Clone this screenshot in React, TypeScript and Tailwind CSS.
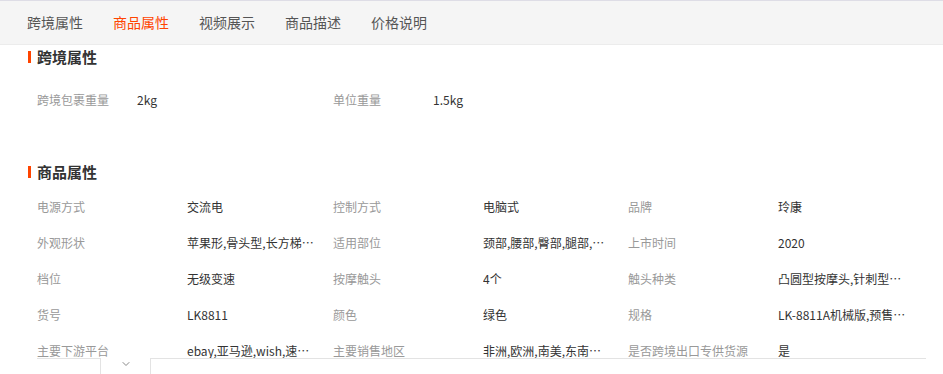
import { ChevronDown } from 'lucide-react';

const tabs = ['跨境属性', '商品属性', '视频展示', '商品描述', '价格说明'];

const crossBorder = [
  { label: '跨境包裹重量', value: '2kg' },
  { label: '单位重量', value: '1.5kg' },
];

const attrs = [
  { label: '电源方式', value: '交流电' },
  { label: '控制方式', value: '电脑式' },
  { label: '品牌', value: '玲康' },
  { label: '外观形状', value: '苹果形,骨头型,长方梯形,圆形' },
  { label: '适用部位', value: '颈部,腰部,臀部,腿部,肩部,背部' },
  { label: '上市时间', value: '2020' },
  { label: '档位', value: '无级变速' },
  { label: '按摩触头', value: '4个' },
  { label: '触头种类', value: '凸圆型按摩头,针刺型按摩头' },
  { label: '货号', value: 'LK8811' },
  { label: '颜色', value: '绿色' },
  { label: '规格', value: 'LK-8811A机械版,预售LK-8811B遥控版' },
  { label: '主要下游平台', value: 'ebay,亚马逊,wish,速卖通,独立站,LAZADA' },
  { label: '主要销售地区', value: '非洲,欧洲,南美,东南亚,北美,东北亚,中东' },
  { label: '是否跨境出口专供货源', value: '是' },
];

function SectionTitle({ title }: { title: string }) {
  return (
    <div className="flex h-[24px] items-center pl-[28px]">
      <span className="h-[12px] w-[3px] bg-[#ff4400]"></span>
      <span className="ml-[6px] text-[15px] font-bold text-[#333]">{title}</span>
    </div>
  );
}

function AttrGrid({ items, labelWidth }: { items: { label: string; value: string }[]; labelWidth: string }) {
  return (
    <div className="grid grid-cols-[296px_295px_296px] pl-[37px]">
      {items.map((it) => (
        <div key={it.label} className="flex h-[36px] items-center text-[12px] leading-[36px]">
          <span className={`${labelWidth} shrink-0 whitespace-nowrap text-[#999]`}>{it.label}</span>
          <span className="w-[128px] truncate text-[#333]">{it.value}</span>
        </div>
      ))}
    </div>
  );
}

export default function App() {
  return (
    <div
      className="relative h-[374px] w-[943px] overflow-hidden bg-white"
      style={{ fontFamily: '"Noto Sans CJK SC", "Noto Sans", sans-serif' }}
    >
      <div className="h-px bg-[#dedde6]"></div>

      {/* Tabs */}
      <div className="flex h-[44px] items-center gap-[30px] border-b border-[#ececec] bg-[#f5f5f5] pl-[27px] text-[14px]">
        {tabs.map((t, i) => (
          <span key={t} className={i === 1 ? 'text-[#ff4400]' : 'text-[#555]'}>
            {t}
          </span>
        ))}
      </div>

      <SectionTitle title="跨境属性" />
      <div className="mt-[13px]">
        <AttrGrid items={crossBorder} labelWidth="w-[100px]" />
      </div>

      <div className="mt-[42px]">
        <SectionTitle title="商品属性" />
      </div>
      <div className="mt-[5px]">
        <AttrGrid items={attrs} labelWidth="w-[150px]" />
      </div>

      {/* Fold cover */}
      <div className="absolute left-[37px] right-[17px] top-[358px] h-[40px] border-t border-[#e3e3e3] bg-white">
        <div className="absolute left-[63px] top-[-1px] flex h-[30px] w-[51px] justify-center border-x border-b border-[#e3e3e3] bg-white">
          <ChevronDown className="h-[12px] w-[12px] text-[#888]" strokeWidth={2} />
        </div>
      </div>
    </div>
  );
}
